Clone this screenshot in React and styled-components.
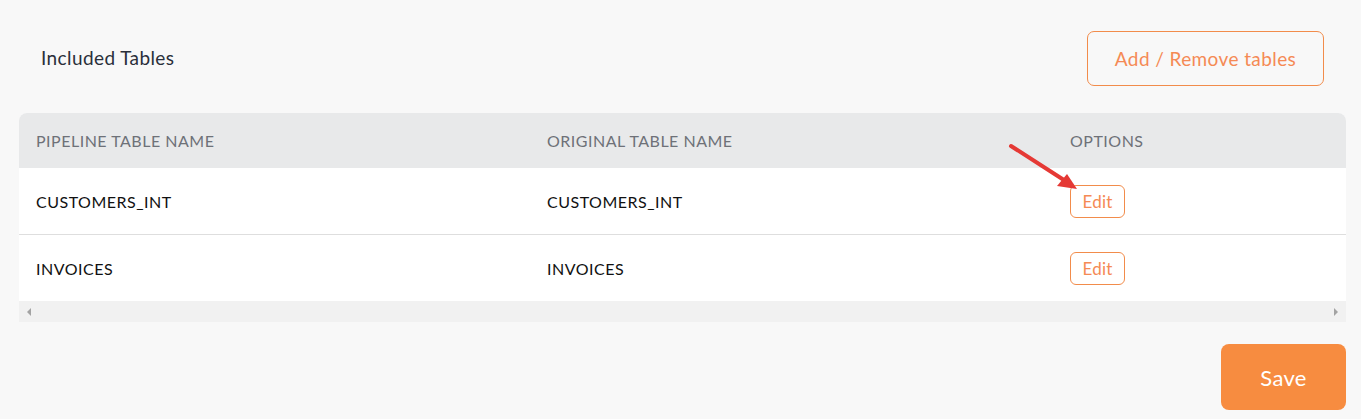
import styled, { createGlobalStyle } from "styled-components";

const GlobalStyle = createGlobalStyle`
body {
    margin: 0;
    background: #f8f8f8;
    font-family: Lato, "Open Sans", sans-serif;
}
`
const Page = styled.div`
position: relative;
display: flex;
flex-direction: column;
padding: 31px 15px 0 19px;
height: 419px;
box-sizing: border-box;
`
const TopBar = styled.div`
display: flex;
align-items: center;
justify-content: space-between;
padding: 0 22px;
`
const Title = styled.div`
font-size: 19px;
letter-spacing: 0.4px;
color: #2a2f3a;
margin-top: -2px;
`
const OutlineButton = styled.button`
font-family: inherit;
background: transparent;
border: 1px solid #f28c4b;
color: #f58a55;
border-radius: ${props => props.$small ? '6px' : '7px'};
font-size: ${props => props.$small ? '17px' : '19px'};
letter-spacing: ${props => props.$small ? '0.2px' : '0.4px'};
height: ${props => props.$small ? '33px' : '55px'};
width: ${props => props.$small ? '55px' : '237px'};
padding: 0;
cursor: pointer;
`
const Table = styled.div`
margin-top: 27px;
border-radius: 8px 8px 0 0;
overflow: hidden;
background: #fff;
`
const Row = styled.div`
display: grid;
grid-template-columns: 511px 523px 1fr;
align-items: center;
height: ${props => props.$head ? '55px' : '66px'};
background: ${props => props.$head ? '#e8e9ea' : '#fff'};
border-bottom: ${props => props.$line ? '1px solid #dedede' : 'none'};
`
const Cell = styled.div`
padding-left: 17px;
font-size: 16px;
letter-spacing: 0.5px;
color: ${props => props.$head ? '#6e7178' : '#111'};
`
const ScrollBar = styled.div`
display: flex;
align-items: center;
justify-content: space-between;
height: 21px;
background: #f1f1f1;
padding: 0 8px;
`
const ScrollArrow = styled.div`
width: 0;
height: 0;
border-top: 4px solid transparent;
border-bottom: 4px solid transparent;
${props => props.$right ? 'border-left: 4px solid #a3a3a3;' : 'border-right: 4px solid #a3a3a3;'}
`
const Footer = styled.div`
display: flex;
justify-content: flex-end;
margin-top: 22px;
`
const SaveButton = styled.button`
font-family: inherit;
width: 125px;
height: 66px;
border: none;
border-radius: 8px;
background: #f78c40;
color: #fff;
font-size: 22px;
letter-spacing: 0.3px;
cursor: pointer;
`
const Arrow = styled.svg`
position: absolute;
left: 1005px;
top: 140px;
`

const rows = [
    { pipeline: 'CUSTOMERS_INT', original: 'CUSTOMERS_INT' },
    { pipeline: 'INVOICES', original: 'INVOICES' },
]

const App = () => {
    return (
        <>
            <GlobalStyle />
            <Page>
                <TopBar>
                    <Title>Included Tables</Title>
                    <OutlineButton>Add / Remove tables</OutlineButton>
                </TopBar>
                <Table>
                    <Row $head>
                        <Cell $head>PIPELINE TABLE NAME</Cell>
                        <Cell $head>ORIGINAL TABLE NAME</Cell>
                        <Cell $head>OPTIONS</Cell>
                    </Row>
                    {rows.map((item, idx) => (
                        <Row key={idx} $line={idx < rows.length - 1}>
                            <Cell>{item.pipeline}</Cell>
                            <Cell>{item.original}</Cell>
                            <Cell><OutlineButton $small>Edit</OutlineButton></Cell>
                        </Row>
                    ))}
                    <ScrollBar>
                        <ScrollArrow />
                        <ScrollArrow $right />
                    </ScrollBar>
                </Table>
                <Footer>
                    <SaveButton>Save</SaveButton>
                </Footer>
                <Arrow width="80" height="56" viewBox="0 0 80 56">
                    <line x1="6" y1="6" x2="62" y2="42" stroke="#e53935" strokeWidth="4" strokeLinecap="round" />
                    <polygon points="72,49 52,46 62,34" fill="#e53935" />
                </Arrow>
            </Page>
        </>
    )
}
export default App;
